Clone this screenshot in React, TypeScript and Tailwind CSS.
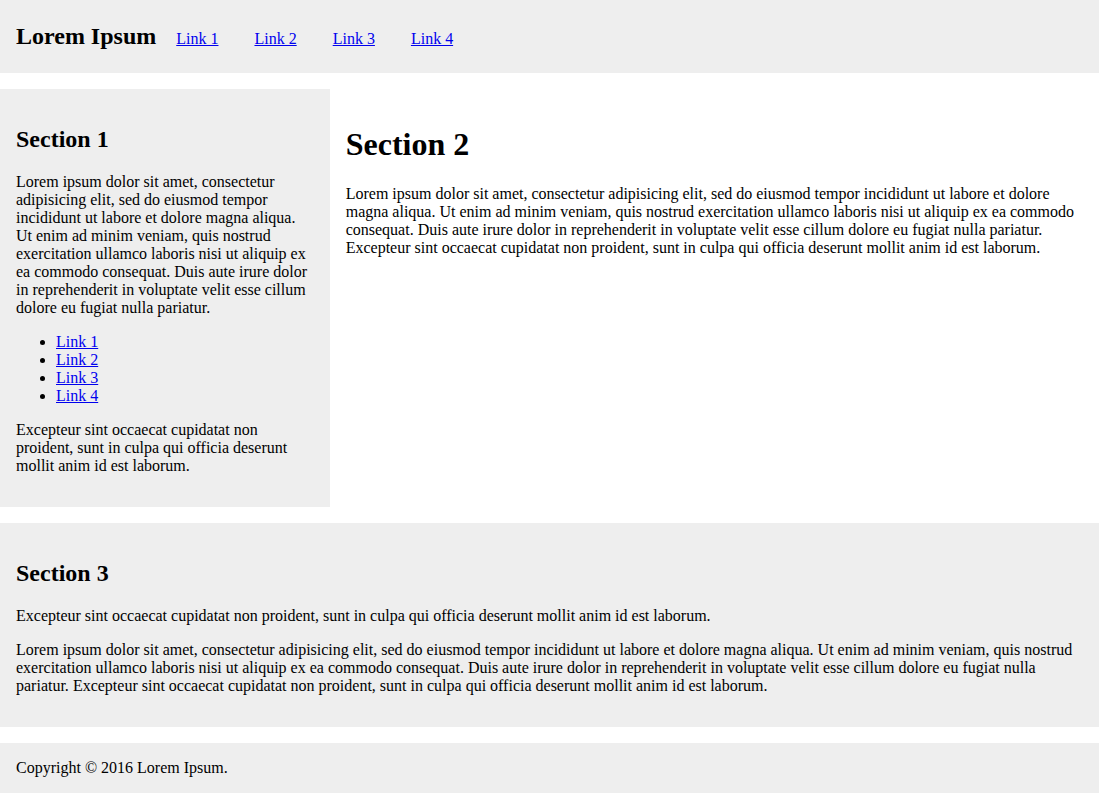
const LINKS = ["Link 1", "Link 2", "Link 3", "Link 4"];

const LOREM =
  "Lorem ipsum dolor sit amet, consectetur adipisicing elit, sed do eiusmod tempor incididunt ut labore et dolore magna aliqua. Ut enim ad minim veniam, quis nostrud exercitation ullamco laboris nisi ut aliquip ex ea commodo consequat. Duis aute irure dolor in reprehenderit in voluptate velit esse cillum dolore eu fugiat nulla pariatur.";
const EXCEPTEUR =
  "Excepteur sint occaecat cupidatat non proident, sunt in culpa qui officia deserunt mollit anim id est laborum.";

export default function App() {
  return (
    <div className="font-['Liberation_Serif','Times_New_Roman',serif] text-[16px] leading-[18px] text-black bg-white">
      {/* header */}
      <header className="bg-[#eeeeee] px-4 pt-4 pb-[17px] flex items-baseline">
        <h1 className="text-[24px] font-bold leading-[40px]">Lorem Ipsum</h1>
        <ul className="flex items-baseline gap-9 ml-5">
          {LINKS.map((l) => (
            <li key={l}>
              <a href="#" className="text-[#0000ee] underline">
                {l}
              </a>
            </li>
          ))}
        </ul>
      </header>

      {/* main row */}
      <div className="flex mt-4">
        <aside className="w-[30%] shrink-0 bg-[#eeeeee] p-4">
          <h2 className="text-[24px] font-bold leading-[28px] my-5">Section 1</h2>
          <p className="my-4">{LOREM}</p>
          <ul className="list-disc pl-10 my-4">
            {LINKS.map((l) => (
              <li key={l}>
                <a href="#" className="text-[#0000ee] underline">
                  {l}
                </a>
              </li>
            ))}
          </ul>
          <p className="my-4">{EXCEPTEUR}</p>
        </aside>
        <main className="flex-1 p-4">
          <h1 className="text-[32px] font-bold leading-[37px] my-[21.44px]">Section 2</h1>
          <p className="my-4">
            {LOREM} {EXCEPTEUR}
          </p>
        </main>
      </div>

      {/* section 3 */}
      <section className="bg-[#eeeeee] p-4 mt-4">
        <h2 className="text-[24px] font-bold leading-[28px] my-5">Section 3</h2>
        <p className="my-4">{EXCEPTEUR}</p>
        <p className="my-4">
          {LOREM} {EXCEPTEUR}
        </p>
      </section>

      {/* footer */}
      <footer className="bg-[#eeeeee] p-4 mt-4">
        <p>Copyright © 2016 Lorem Ipsum.</p>
      </footer>
    </div>
  );
}
